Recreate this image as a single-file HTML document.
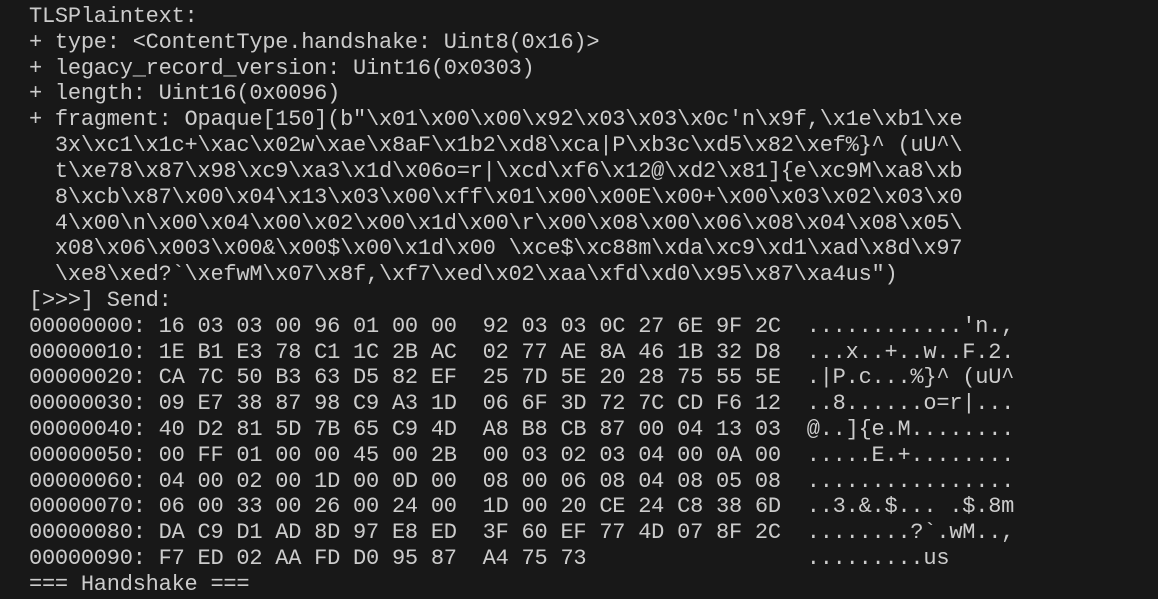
<!DOCTYPE html>
<html><head><meta charset="utf-8"><style>
html,body{margin:0;padding:0;background:#181818;width:1158px;height:599px;overflow:hidden}
#t{position:absolute;left:29px;top:4px;font-family:"Liberation Mono",monospace;font-size:22px;letter-spacing:-0.24px;color:#cccccc;white-space:pre}
#t div{height:25.82px;line-height:25.82px}
</style></head><body><div id="t"><div>TLSPlaintext:</div><div>+ type: &lt;ContentType.handshake: Uint8(0x16)&gt;</div><div>+ legacy_record_version: Uint16(0x0303)</div><div>+ length: Uint16(0x0096)</div><div>+ fragment: Opaque[150](b"\x01\x00\x00\x92\x03\x03\x0c'n\x9f,\x1e\xb1\xe</div><div>  3x\xc1\x1c+\xac\x02w\xae\x8aF\x1b2\xd8\xca|P\xb3c\xd5\x82\xef%}^ (uU^\</div><div>  t\xe78\x87\x98\xc9\xa3\x1d\x06o=r|\xcd\xf6\x12@\xd2\x81]{e\xc9M\xa8\xb</div><div>  8\xcb\x87\x00\x04\x13\x03\x00\xff\x01\x00\x00E\x00+\x00\x03\x02\x03\x0</div><div>  4\x00\n\x00\x04\x00\x02\x00\x1d\x00\r\x00\x08\x00\x06\x08\x04\x08\x05\</div><div>  x08\x06\x003\x00&amp;\x00$\x00\x1d\x00 \xce$\xc88m\xda\xc9\xd1\xad\x8d\x97</div><div>  \xe8\xed?`\xefwM\x07\x8f,\xf7\xed\x02\xaa\xfd\xd0\x95\x87\xa4us")</div><div>[&gt;&gt;&gt;] Send:</div><div>00000000: 16 03 03 00 96 01 00 00  92 03 03 0C 27 6E 9F 2C  ............'n.,</div><div>00000010: 1E B1 E3 78 C1 1C 2B AC  02 77 AE 8A 46 1B 32 D8  ...x..+..w..F.2.</div><div>00000020: CA 7C 50 B3 63 D5 82 EF  25 7D 5E 20 28 75 55 5E  .|P.c...%}^ (uU^</div><div>00000030: 09 E7 38 87 98 C9 A3 1D  06 6F 3D 72 7C CD F6 12  ..8......o=r|...</div><div>00000040: 40 D2 81 5D 7B 65 C9 4D  A8 B8 CB 87 00 04 13 03  @..]{e.M........</div><div>00000050: 00 FF 01 00 00 45 00 2B  00 03 02 03 04 00 0A 00  .....E.+........</div><div>00000060: 04 00 02 00 1D 00 0D 00  08 00 06 08 04 08 05 08  ................</div><div>00000070: 06 00 33 00 26 00 24 00  1D 00 20 CE 24 C8 38 6D  ..3.&amp;.$... .$.8m</div><div>00000080: DA C9 D1 AD 8D 97 E8 ED  3F 60 EF 77 4D 07 8F 2C  ........?`.wM..,</div><div>00000090: F7 ED 02 AA FD D0 95 87  A4 75 73                 .........us</div><div>=== Handshake ===</div></div></body></html>
